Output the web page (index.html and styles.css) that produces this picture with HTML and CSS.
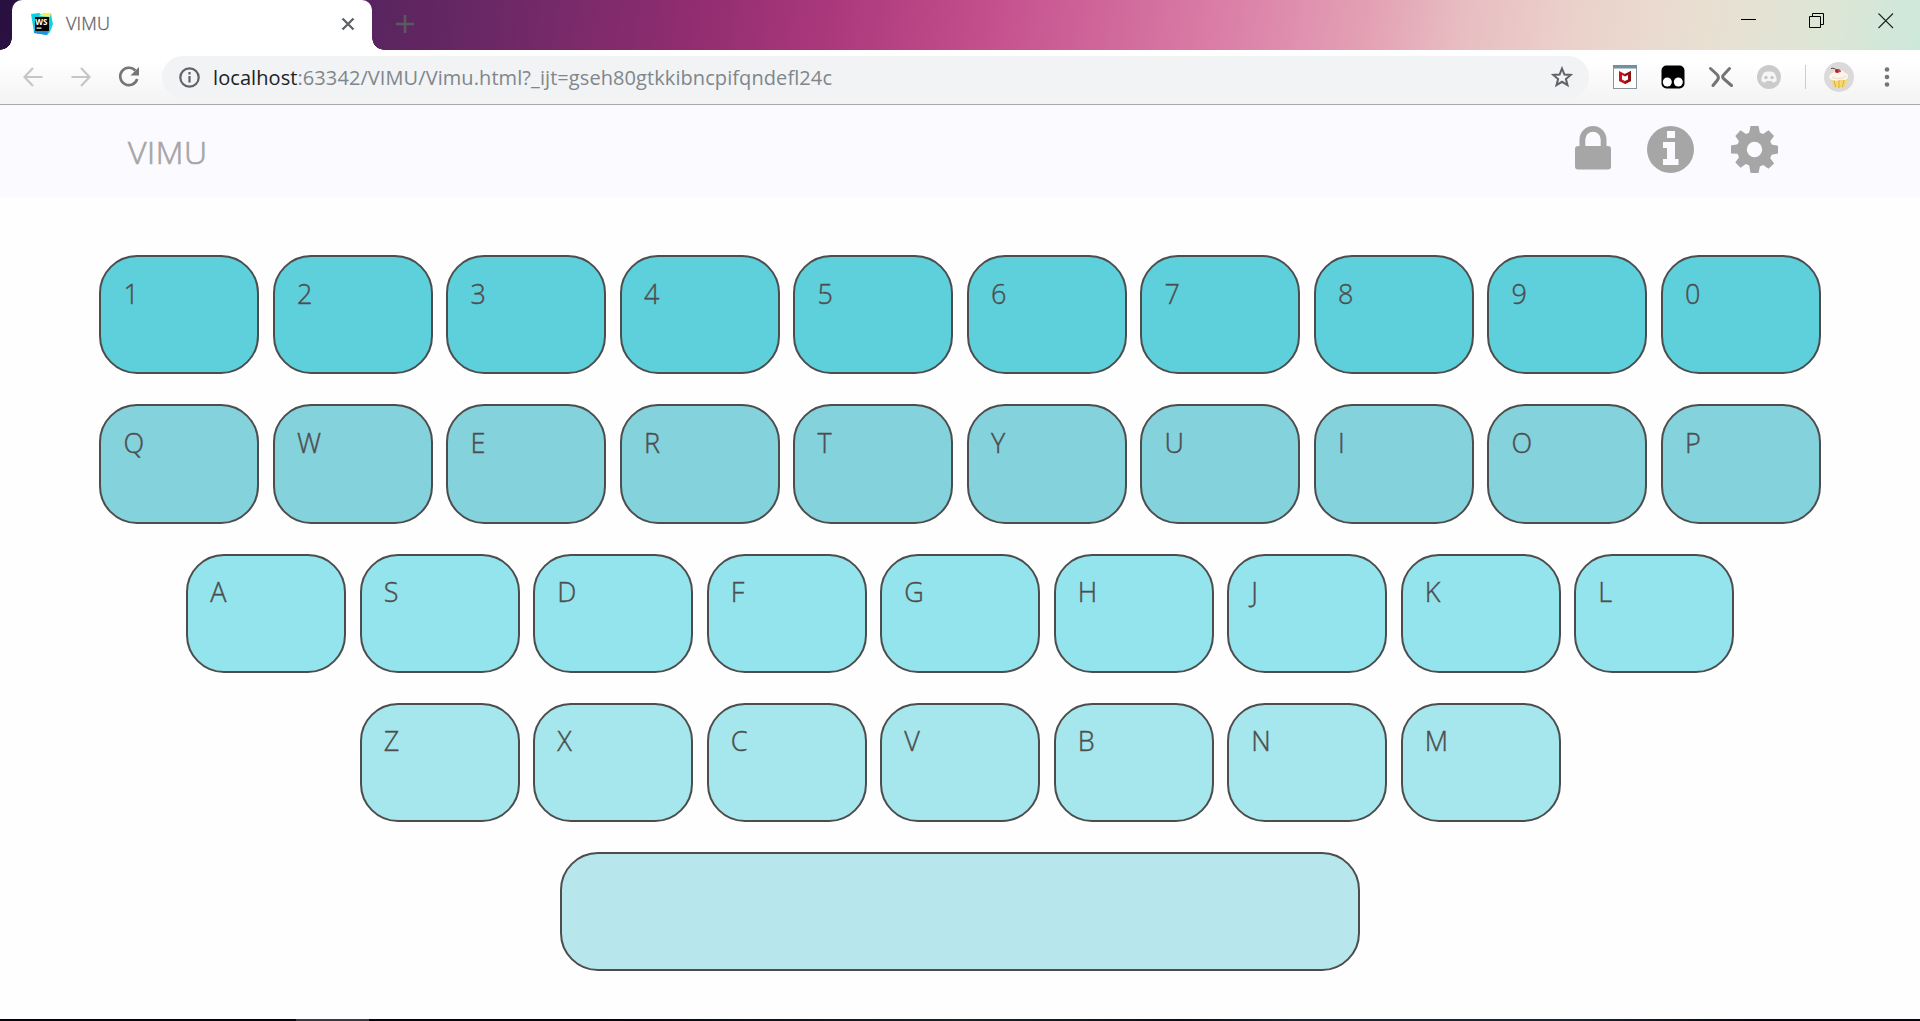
FILE: index.html
```html
<!DOCTYPE html>
<html lang="en">
<head>
<meta charset="utf-8">
<title>VIMU</title>
<link rel="stylesheet" href="styles.css">
</head>
<body>
<div class="tabstrip">
  <div class="tab">
    <svg class="tab-icon" width="24" height="24" viewBox="0 0 24 24">
      <path d="M1 2 L9 1 L12 3 L21 1 L22 8 L23 12 L20 20 L17 23 L4 21 L3 14Z" fill="#0fcfe0"/>
      <path d="M9 4 L13 1 L21 1 L20 5Z" fill="#f2f25a"/>
      <path d="M4 19 L18 19 L17 23 L4 21Z" fill="#1f8fe0"/>
      <rect x="5" y="5" width="14" height="14" fill="#050505"/>
      <text x="5.300" y="12.500" class="ws">WS</text>
      <rect x="6.500" y="15.500" width="5" height="1.200" fill="#fff"/>
    </svg>
    <span class="tab-title">VIMU</span>
    <svg class="tab-close" width="14" height="14" viewBox="0 0 14 14"><path d="M1.500 1.500l11 11M12.500 1.500l-11 11" stroke="#5f6368" stroke-width="2.300"/></svg>
  </div>
  <svg class="new-tab" width="18" height="18" viewBox="0 0 18 18"><path d="M9 0v18M0 9h18" stroke="#595b5a" stroke-width="2.600"/></svg>
  <div class="window-buttons">
    <svg width="16" height="16" viewBox="0 0 16 16"><path d="M0 6.500h15" stroke="#000"/></svg>
    <svg width="16" height="16" viewBox="0 0 16 16"><path d="M.5 3.500h11v11H.5zM3.500 3.500v-3h11v11h-3" stroke="#000" fill="none"/></svg>
    <svg width="16" height="16" viewBox="0 0 16 16"><path d="M.5 .5l14.500 14.500M15 .5L.5 15" stroke="#222" stroke-width="1.100"/></svg>
  </div>
</div>
<div class="toolbar">
  <svg class="back" width="20" height="20" viewBox="0 0 20 20"><path d="M19.500 10H1.500M10 1L1.500 10l8.500 9" fill="none" stroke="#c6c6c6" stroke-width="2.200"/></svg>
  <svg class="forward" width="20" height="20" viewBox="0 0 20 20"><path d="M.5 10h18M10 1l8.500 9-8.500 9" fill="none" stroke="#c6c6c6" stroke-width="2.200"/></svg>
  <svg class="reload" width="22" height="22" viewBox="0 0 22 22"><path d="M17.300 4.500A8.700 8.700 0 1 0 19.200 13" fill="none" stroke="#757575" stroke-width="2.600"/><path d="M21 1v8.500h-8.500z" fill="#757575"/></svg>
  <div class="omnibox">
    <svg class="site-info" width="21" height="21" viewBox="0 0 21 21"><circle cx="10.500" cy="10.500" r="9.200" fill="none" stroke="#5f6368" stroke-width="2.200"/><path d="M10.500 9v6.500M10.500 5v2.500" stroke="#5f6368" stroke-width="2.200"/></svg>
    <div class="url"><span class="host">localhost</span>:63342/VIMU/Vimu.html?_ijt=gseh80gtkkibncpifqndefl24c</div>
    <svg class="star" width="22" height="22" viewBox="0 0 22 22"><path d="M11 2.500l2.400 6 6.400.4-4.900 4.100 1.600 6.200-5.500-3.400-5.500 3.400 1.600-6.200-4.900-4.100 6.400-.4z" fill="none" stroke="#5f6368" stroke-width="2"/></svg>
  </div>
  <div class="extensions">
    <svg width="24" height="24" viewBox="0 0 24 24"><rect x=".5" y=".5" width="23" height="23" fill="#fff" stroke="#8a929c"/><path d="M0 0h24v3.500H0z" fill="#7390a0"/><path d="M6 6l6 3 6-3v10l-6 3-6-3z" fill="#c61218"/><path d="M12 9l6-3v10l-6 3z" fill="#8e1115"/><path d="M9 10l3 1.500 3-1.500v4.500L12 16l-3-1.500z" fill="#fff"/></svg>
    <svg width="24" height="24" viewBox="0 0 24 24"><rect x=".5" y=".5" width="23" height="23" rx="5" fill="#000"/><circle cx="6.300" cy="17" r="4.500" fill="#fff"/><circle cx="17.300" cy="17" r="4.500" fill="#fff"/></svg>
    <svg width="24" height="24" viewBox="0 0 24 24"><path d="M1.500 3.500L8 9.500Q10.500 12 8.500 15L4 20.500M20.500 3.500L14.500 10Q12.500 12 15 14L22.500 20.500" fill="none" stroke="#747474" stroke-width="3" stroke-linecap="round"/></svg>
    <svg width="24" height="24" viewBox="0 0 24 24"><circle cx="12" cy="12" r="12" fill="#cbcbcb"/><path d="M7 7.500L10 6.500h4l3 1c2 3 3 6 2.600 8.500-1.600 1-3 1.500-4 1.500l-1-1.500H9.400l-1 1.500c-1 0-2.400-.5-4-1.500C4 13.500 5 10.500 7 7.500z" fill="#f5f5f5"/><circle cx="9" cy="12.500" r="1.600" fill="#c0c0c0"/><circle cx="15" cy="12.500" r="1.600" fill="#c0c0c0"/></svg>
  </div>
  <div class="divider"></div>
  <svg class="avatar" width="30" height="30" viewBox="0 0 30 30"><circle cx="15" cy="15" r="15" fill="#dadada"/><path d="M6.500 16h17.500l-3 9c-3 1.400-8 1.400-11 0z" fill="#f6d873"/><path d="M10 18l1.500 7M15 18v8M20 18l-1.500 7" stroke="#dfad3d"/><path d="M6 17c-2-3 1-6 3-6 1-4 10-4 12 0 3 0 4 4 2 6-2 2-5 0-7 1-3 1-7 1-10-1z" fill="#fff4e8"/><path d="M8 15c3 2 10 2 14-1" stroke="#ead8c7" fill="none"/><circle cx="13" cy="9" r="2" fill="#a8202d"/><path d="M13.500 7c2-.5 3.500 1 3.500 3l-3 .5z" fill="#d53c45"/><path d="M12.500 8c-1-1.500-3-2-5.500-1.500" stroke="#6b3b33" fill="none"/></svg>
  <svg class="menu" width="6" height="22" viewBox="0 0 6 22"><g fill="#757575"><circle cx="3" cy="3.500" r="2.300"/><circle cx="3" cy="11" r="2.300"/><circle cx="3" cy="18.500" r="2.300"/></g></svg>
</div>
<header class="page-header">
  <h1 class="brand">VIMU</h1>
  <nav class="nav">
    <svg width="36" height="44" viewBox="0 0 36 44"><path d="M4.500 20V13.500a13.500 13.500 0 0 1 27 0V20h1.500q3 0 3 3v17.500q0 3-3 3H3q-3 0-3-3V23q0-3 3-3zM10.300 20h15.400v-6.500a7.700 7.700 0 0 0-15.400 0z" fill="#a6a6a6"/></svg>
    <svg width="47" height="47" viewBox="0 0 47 47"><circle cx="23.500" cy="23.500" r="23.500" fill="#a6a6a6"/><path d="M20 5h8v7h-8zM16 16h12v17h3.500v6H16v-6h4V22h-4z" fill="#fbfaff"/></svg>
    <svg width="47" height="47" viewBox="0 0 47 47"><path d="M19.500 0h8l1.400 6.700 3.300 1.400L37.500 4.300l5.600 5.600-3.900 5.300 1.500 3.400L47 19.700v7.800l-6.300 1.200-1.500 3.300 3.900 5.400-5.600 5.400-5.300-3.700-3.300 1.300L27.500 47h-8l-1.300-7.600-3.300-1.300-5.300 3.700-5.300-5.300 3.700-5.300-1.400-3.400L0 27.500v-8l6.600-1.200L8 15.200 4.300 9.900l5.300-5.600 5.300 3.800 3.300-1.400z" fill="#a6a6a6"/><circle cx="23.500" cy="23.500" r="7.700" fill="#fbfaff"/></svg>
  </nav>
</header>
<main class="keyboard">
  <div class="row numbers"><div class="key">1</div><div class="key">2</div><div class="key">3</div><div class="key">4</div><div class="key">5</div><div class="key">6</div><div class="key">7</div><div class="key">8</div><div class="key">9</div><div class="key">0</div></div>
  <div class="row upper"><div class="key">Q</div><div class="key">W</div><div class="key">E</div><div class="key">R</div><div class="key">T</div><div class="key">Y</div><div class="key">U</div><div class="key">I</div><div class="key">O</div><div class="key">P</div></div>
  <div class="row home"><div class="key">A</div><div class="key">S</div><div class="key">D</div><div class="key">F</div><div class="key">G</div><div class="key">H</div><div class="key">J</div><div class="key">K</div><div class="key">L</div></div>
  <div class="row lower"><div class="key">Z</div><div class="key">X</div><div class="key">C</div><div class="key">V</div><div class="key">B</div><div class="key">N</div><div class="key">M</div></div>
  <div class="row bottom"><div class="key space"></div></div>
</main>
<footer class="taskbar"></footer>
</body>
</html>
```
FILE: styles.css
```css
* { box-sizing: border-box; }
body {
  margin: 0;
  height: 1021px;
  display: flex;
  flex-direction: column;
  overflow: hidden;
  background: #fefefe;
  font-family: "Open Sans", "Noto Sans", sans-serif;
}
svg { display: block; flex: none; }

.tabstrip {
  height: 50px;
  flex: none;
  display: flex;
  padding-left: 12px;
  background: linear-gradient(100deg, #281040 0%, #5a2560 20%, #6c2866 26%, #902d70 36%, #a9387b 43%, #c04b8a 50%, #cd6197 56%, #db80a8 64%, #e3a0b4 71%, #e8bdc1 76%, #ebd2cb 82%, #e8e0d2 89%, #dde6d6 95%, #cce8da 100%);
}
.tab {
  position: relative;
  width: 360px;
  display: flex;
  align-items: flex-start;
  padding: 12px 17px 0 18px;
  background: #fff;
  border-radius: 10px 10px 0 0;
}
.tab::before, .tab::after {
  content: "";
  position: absolute;
  bottom: 0;
  width: 12px;
  height: 12px;
}
.tab::before { left: -12px; background: radial-gradient(circle at 0 0, transparent 11.500px, #fff 12px); }
.tab::after { right: -12px; background: radial-gradient(circle at 100% 0, transparent 11.500px, #fff 12px); }
.ws { font: 700 8px "Open Sans", sans-serif; fill: #fff; }
.tab-title {
  margin: -2px 0 0 12px;
  font-size: 18px;
  line-height: 26px;
  font-weight: 300;
  letter-spacing: .2px;
  color: #5f6368;
  -webkit-text-stroke: .3px #5f6368;
}
.tab-close { margin: 5px 0 0 auto; }
.new-tab { margin: 15px 0 0 24px; }
.window-buttons { display: flex; gap: 52px; margin: 13px 26px 0 auto; }
.window-buttons svg:last-child { margin-left: 1px; }

.toolbar {
  height: 55px;
  flex: none;
  display: flex;
  align-items: center;
  padding: 0 30px 0 23px;
  background: linear-gradient(#fff 20%, #f3f3f3);
  border-bottom: 1px solid #a9a9a9;
}
.forward { margin-left: 28px; }
.reload { margin-left: 27px; }
.omnibox {
  width: 1427px;
  height: 42px;
  margin-left: 22px;
  padding: 0 16px 0 17px;
  display: flex;
  align-items: center;
  border-radius: 21px;
  background: #f1f3f4;
}
.url { margin-left: 13px; padding-top: 2px; font-size: 20px; letter-spacing: .08px; line-height: 28px; color: #80868b; white-space: nowrap; }
.host { color: #202124; }
.star { margin-left: auto; }
.extensions { display: flex; gap: 24px; margin-left: 24px; }
.divider { width: 1px; height: 24px; margin-left: 24px; background: #ccc; }
.avatar { margin-left: 18px; }
.menu { margin-left: auto; }

.page-header {
  height: 92px;
  flex: none;
  display: flex;
  justify-content: space-between;
  padding: 0 142px 0 128px;
  background: #fbfaff;
}
.brand {
  margin: 24px 0 0;
  font-size: 32px;
  line-height: 46px;
  font-weight: 300;
  letter-spacing: .6px;
  color: #a6a6a6;
  -webkit-text-stroke: .7px #a6a6a6;
}
.nav { display: flex; gap: 37px; padding-top: 21px; }
.nav svg:first-child { margin-right: -1px; }

.keyboard { flex: 1; display: flex; flex-direction: column; gap: 30px; padding-top: 58px; }
.row { display: flex; justify-content: center; gap: 13.500px; }
.key {
  width: 160px;
  height: 119.250px;
  padding: 19.400px 0 0 22.300px;
  border: 2px solid #4d4d4d;
  border-radius: 38px;
  font-size: 27px;
  line-height: 34px;
  font-weight: 300;
  color: #4d4d4d;
  -webkit-text-stroke: .4px #4d4d4d;
}
.space { width: 800px; }
.numbers .key { padding-top: 20px; background: #5dd0dc; }
.upper .key { background: #83d2dc; }
.home .key { background: #94e4ed; }
.lower .key { background: #a5e7ed; }
.bottom .key { background: #b7e7ec; }

.taskbar { height: 2px; flex: none; background: linear-gradient(90deg, #050509 0 296px, #3a3a3e 296px 369px, #050509 369px 600px, #182428 960px, #0a1014 1180px, #1a2733 1300px, #1a2733 1560px, #08080c 1750px); }
```
